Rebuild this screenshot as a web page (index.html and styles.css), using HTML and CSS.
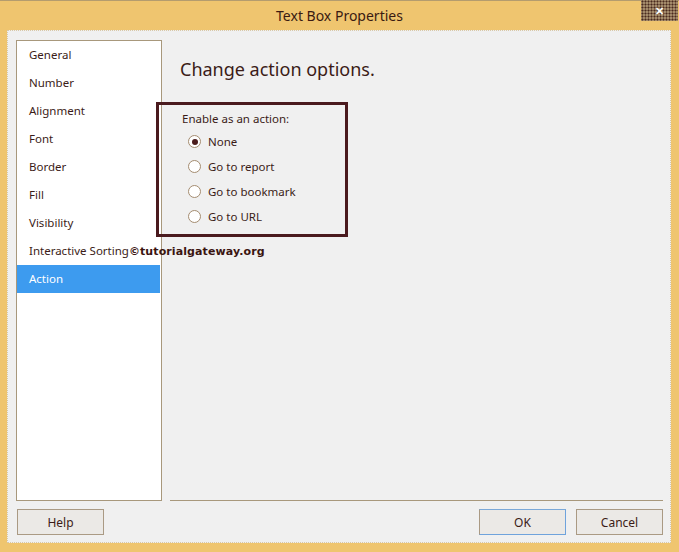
FILE: index.html
```html
<!DOCTYPE html>
<html>
<head>
<meta charset="utf-8">
<link rel="stylesheet" href="styles.css">
</head>
<body>
<div class="window">
  <div class="titlebar">
    <span class="title">Text Box Properties</span>
    <div class="close">&#x2715;</div>
  </div>
  <div class="client">
    <div class="main">
      <ul class="nav">
        <li class="item">General</li>
        <li class="item">Number</li>
        <li class="item">Alignment</li>
        <li class="item">Font</li>
        <li class="item">Border</li>
        <li class="item">Fill</li>
        <li class="item">Visibility</li>
        <li class="item">Interactive Sorting<span class="watermark">©tutorialgateway.org</span></li>
        <li class="item selected">Action</li>
      </ul>
      <div class="pane">
        <h1 class="heading">Change action options.</h1>
        <div class="group">
          <div class="group-label">Enable as an action:</div>
          <div class="radio checked"><span class="dot"></span><span>None</span></div>
          <div class="radio"><span class="dot"></span><span>Go to report</span></div>
          <div class="radio"><span class="dot"></span><span>Go to bookmark</span></div>
          <div class="radio"><span class="dot"></span><span>Go to URL</span></div>
          <div class="highlight"></div>
        </div>
      </div>
    </div>
    <div class="buttons">
      <button class="btn">Help</button>
      <div class="spacer"></div>
      <button class="btn default">OK</button>
      <button class="btn">Cancel</button>
    </div>
  </div>
</div>
</body>
</html>
```
FILE: styles.css
```css
html, body {
  margin: 0;
  padding: 0;
}
body {
  width: 679px;
  height: 552px;
  background: #efc56f;
  font-family: "Noto Sans", "Open Sans", sans-serif;
  color: #3b1c17;
  overflow: hidden;
}
.window {
  width: 679px;
  height: 552px;
  box-sizing: border-box;
  border-top: 1px solid #b49c6e;
  display: flex;
  flex-direction: column;
}
.titlebar {
  height: 30px;
  position: relative;
  display: flex;
  align-items: center;
  justify-content: center;
}
.title {
  font-size: 14px;
  color: #3a1a12;
  margin-top: -1px;
}
.close {
  position: absolute;
  right: 1px;
  top: -1px;
  width: 37px;
  height: 21px;
  background-color: #a38a6a;
  background-image: radial-gradient(circle, #4a2a1e 0.8px, transparent 1.2px);
  background-size: 3px 3px;
  color: #ffffff;
  font-size: 11px;
  font-weight: bold;
  display: flex;
  align-items: center;
  justify-content: center;
}
.client {
  margin: 0 8px 9px 7px;
  flex: 1;
  background: #f0f0f0;
  border: 1px dotted #d8c8a8;
  box-sizing: border-box;
  padding: 9px 7px 7px 8px;
  display: flex;
  flex-direction: column;
}
.main {
  display: flex;
  height: 461px;
}
.nav {
  list-style: none;
  margin: 0;
  padding: 0;
  width: 146px;
  box-sizing: border-box;
  border: 1px solid #a8987c;
  background: #ffffff;
}
.item {
  height: 28px;
  line-height: 28px;
  padding-left: 12px;
  font-size: 11.5px;
  white-space: nowrap;
  margin-right: 1px;
  position: relative;
  z-index: 2;
}
.item.selected {
  background: #3d9bef;
  color: #ffffff;
}
.watermark {
  font-family: "DejaVu Sans", sans-serif;
  font-weight: bold;
  font-size: 11px;
  color: #3a1410;
  letter-spacing: 0.1px;
}
.pane {
  flex: 1;
  margin-left: 8px;
  border-bottom: 1px solid #a8987c;
}
.heading {
  margin: 0;
  padding: 17px 0 0 10px;
  font-size: 18px;
  font-weight: normal;
  line-height: 24px;
  color: #3b1c17;
}
.group {
  position: relative;
  margin-top: 29px;
  padding-left: 12px;
}
.group-label {
  font-size: 11.5px;
  line-height: 18px;
  margin-bottom: 1px;
}
.radio {
  display: flex;
  align-items: center;
  gap: 7px;
  height: 25px;
  padding-left: 6px;
  font-size: 11.5px;
}
.dot {
  width: 11px;
  height: 11px;
  border: 1px solid #a48c70;
  border-radius: 50%;
  background: #ffffff;
  display: flex;
  align-items: center;
  justify-content: center;
}
.radio.checked .dot::after {
  content: "";
  width: 6px;
  height: 6px;
  border-radius: 50%;
  background: #4a1c1c;
}
.highlight {
  position: absolute;
  left: -14px;
  top: -8px;
  width: 192px;
  height: 135px;
  box-sizing: border-box;
  border: 3px solid #4a1a1e;
}
.buttons {
  display: flex;
  margin-top: 8px;
  gap: 10px;
}
.spacer {
  flex: 1;
}
.btn {
  width: 87px;
  height: 26px;
  font-family: "Noto Sans", "Open Sans", sans-serif;
  font-size: 12px;
  color: #3b1c17;
  background: #ebe9e6;
  border: 1px solid #aa9a84;
  padding: 0;
}
.btn:first-child {
  margin-left: 1px;
}
.btn.default {
  border-color: #7aa8d8 #aa9a84 #aa9a84 #aa9a84;
  border-right-color: #6fa3dc;
  border-bottom-color: #6fa3dc;
}
```
